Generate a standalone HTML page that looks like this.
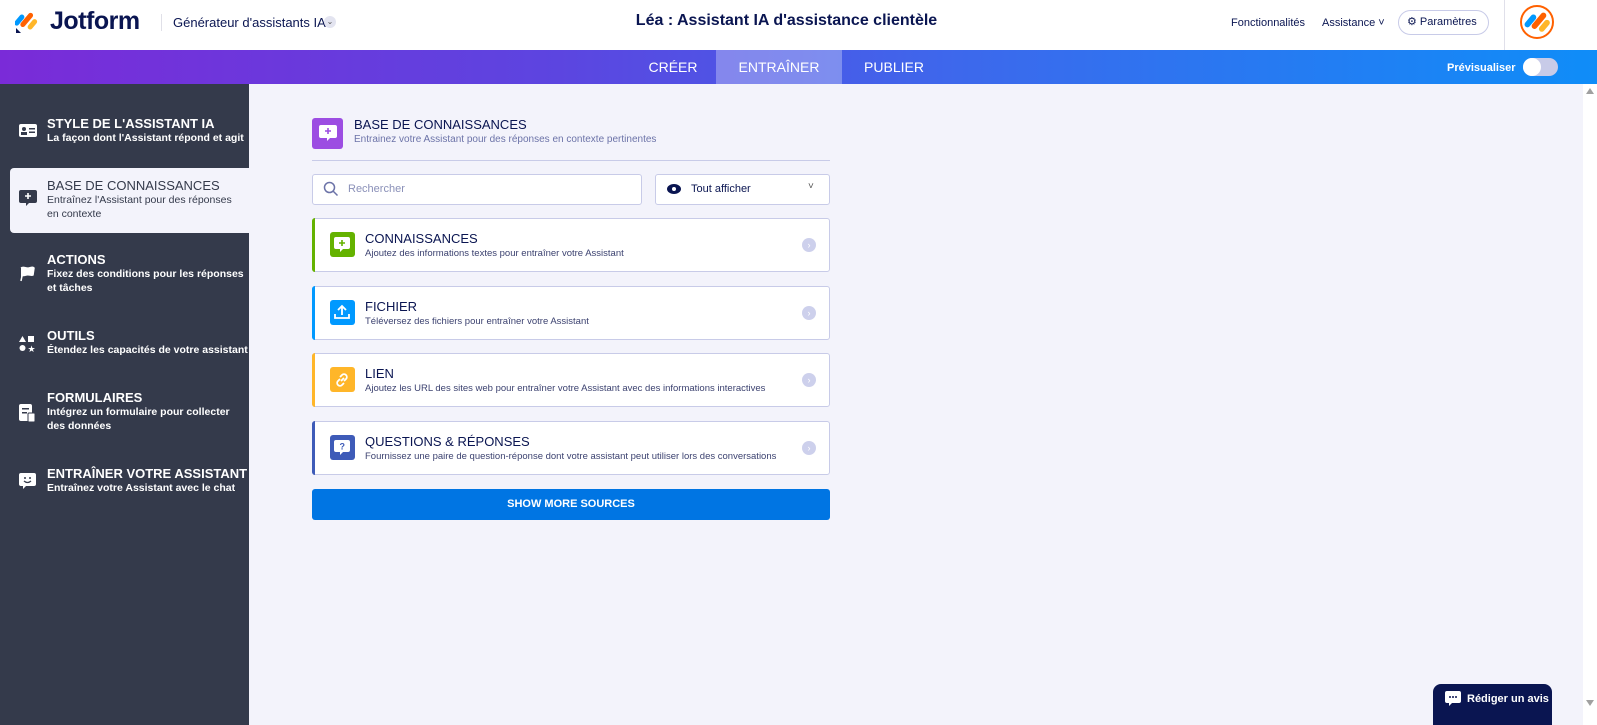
<!DOCTYPE html>
<html><head><meta charset="utf-8"><style>
*{box-sizing:border-box;margin:0;padding:0}
body{width:1597px;height:725px;overflow:hidden;font-family:"Liberation Sans",sans-serif;background:#f3f3fb;position:relative;color:#0a1551}
.hdr{position:absolute;left:0;top:0;width:1597px;height:50px;background:#fff}
.nav{position:absolute;left:0;top:50px;width:1597px;height:34px;background:linear-gradient(90deg,#7a2bd8 0%,#5c45e0 35%,#3d68ec 60%,#0f8df8 100%)}
.tab{position:absolute;top:0;height:34px;line-height:34px;color:#fff;font-size:14px;text-align:center}
.side{position:absolute;left:0;top:84px;width:249px;height:641px;background:#343a4b}
.si{position:absolute;left:47px;color:#fff}
.si b{display:block;font-size:13px;font-weight:bold}
.si span{display:block;font-size:10.5px;line-height:14px;font-weight:bold}
.ic{position:absolute;left:19px}
.card{position:absolute;left:312px;width:518px;height:54px;background:#fff;border:1px solid #c8cbe8;border-radius:3px}
.card .bar{position:absolute;left:-1px;top:-1px;bottom:-1px;width:3px;border-radius:3px 0 0 3px}
.card .ci{position:absolute;left:17px;top:13px;width:25px;height:25px;border-radius:3px}
.card b{position:absolute;left:52px;top:12px;font-size:13px;font-weight:normal;color:#0a1551}
.card span{position:absolute;left:52px;top:29px;font-size:9.5px;color:#3c4270}
.card .ch{position:absolute;right:13px;top:19px;width:14px;height:14px;border-radius:50%;background:#cdd0ec;color:#fff;font-size:9px;text-align:center;line-height:14px}
</style></head><body>
<div class="hdr">
 <svg style="position:absolute;left:15px;top:8px" width="24" height="26" viewBox="0 0 24 26"><rect x="2" y="6" width="5" height="13" rx="2.5" transform="rotate(40 5 12)" fill="#0099ff"/><rect x="9" y="3" width="5" height="17" rx="2.5" transform="rotate(40 11 12)" fill="#ff6100"/><rect x="15" y="10" width="5" height="12" rx="2.5" transform="rotate(40 17 16)" fill="#ffb629"/><path d="M1 20 L6 25 L1 25Z" fill="#0a1551"/></svg>
 <div style="position:absolute;left:50px;top:7px;font-size:25px;font-weight:bold;color:#0a1551;letter-spacing:-0.5px">Jotform</div>
 <div style="position:absolute;left:161px;top:14px;width:1px;height:17px;background:#e0e0e8"></div>
 <div style="position:absolute;left:173px;top:15px;font-size:13px;color:#0a1551">Générateur d'assistants IA</div>
 <div style="position:absolute;left:324px;top:16px;width:12px;height:12px;border-radius:50%;background:#e3e4f0;font-size:8px;text-align:center;line-height:12px;color:#555">⌄</div>
 <div style="position:absolute;left:0;width:1597px;top:12px;text-align:center;font-size:16px;font-weight:bold;color:#0a1551;padding-right:24px">Léa : Assistant IA d'assistance clientèle</div>
 <div style="position:absolute;left:1231px;top:17px;font-size:11px;color:#0a1551">Fonctionnalités</div>
 <div style="position:absolute;left:1322px;top:17px;font-size:11px;color:#0a1551">Assistance ˅</div>
 <div style="position:absolute;left:1398px;top:10px;width:91px;height:25px;border:1px solid #c8cbe8;border-radius:13px;font-size:11px;line-height:23px;padding-left:8px;color:#0a1551">⚙ Paramètres</div>
 <div style="position:absolute;left:1504px;top:0;width:1px;height:50px;background:#e0e0ea"></div>
 <div style="position:absolute;left:1520px;top:5px;width:34px;height:34px;border-radius:50%;border:2px solid #ff6100;background:#fff;overflow:hidden"><svg width="30" height="30" viewBox="0 0 24 26"><rect x="4" y="6" width="5" height="13" rx="2.5" transform="rotate(40 7 12)" fill="#0099ff"/><rect x="11" y="3" width="5" height="17" rx="2.5" transform="rotate(40 13 12)" fill="#ff6100"/><rect x="16" y="10" width="5" height="12" rx="2.5" transform="rotate(40 18 16)" fill="#ffb629"/></svg></div>
</div>
<div class="nav">
 <div class="tab" style="left:630px;width:86px">CRÉER</div>
 <div class="tab" style="left:716px;width:126px;background:rgba(255,255,255,0.3)">ENTRAÎNER</div>
 <div class="tab" style="left:842px;width:104px">PUBLIER</div>
 <div style="position:absolute;left:1447px;top:12px;color:#fff;font-size:11px;font-weight:bold">Prévisualiser</div>
 <div style="position:absolute;left:1523px;top:8px;width:35px;height:18px;border-radius:9px;background:#c8cbe8"></div>
 <div style="position:absolute;left:1523px;top:8px;width:18px;height:18px;border-radius:50%;background:#fff"></div>
</div>
<div class="side">
 <svg class="ic" style="top:40px" width="18" height="13"><rect width="18" height="13" rx="2" fill="#fff"/><circle cx="5" cy="5" r="2" fill="#343a4b"/><rect x="2" y="8" width="6" height="3" fill="#343a4b"/><rect x="10" y="4" width="6" height="1.5" fill="#343a4b"/><rect x="10" y="7.5" width="6" height="1.5" fill="#343a4b"/></svg>
 <div class="si" style="top:32px"><b>STYLE DE L'ASSISTANT IA</b><span>La façon dont l'Assistant répond et agit</span></div>
 <div style="position:absolute;left:10px;top:84px;width:239px;height:65px;background:#f3f3fb;border-radius:4px 0 0 4px"></div>
 <svg class="ic" style="top:106px" width="18" height="16"><path d="M2 0h14a2 2 0 0 1 2 2v9a2 2 0 0 1-2 2h-6l-3 3v-3H2a2 2 0 0 1-2-2V2a2 2 0 0 1 2-2z" fill="#343a4b"/><path d="M9 3v6M6 6h6" stroke="#fff" stroke-width="1.6"/></svg>
 <div class="si" style="top:94px;color:#343a4b"><b style="font-weight:normal;color:#343a4b">BASE DE CONNAISSANCES</b><span style="font-weight:normal;color:#343a4b">Entraînez l'Assistant pour des réponses<br>en contexte</span></div>
 <svg class="ic" style="top:182px" width="16" height="16"><path d="M2 2c3-2 5 1 8 0s4-1 5 0l-1 7c-2 1-4-1-7 0s-3 0-4 1l-1 5" stroke="#fff" stroke-width="1.5" fill="#fff"/></svg>
 <div class="si" style="top:168px"><b>ACTIONS</b><span>Fixez des conditions pour les réponses<br>et tâches</span></div>
 <svg class="ic" style="top:252px" width="16" height="16"><path d="M3.5 0L7 6H0z" fill="#fff"/><rect x="9" y="0" width="6" height="6" fill="#fff"/><circle cx="3.5" cy="12" r="3" fill="#fff"/><text x="8.5" y="16" fill="#fff" font-size="9">★</text></svg>
 <div class="si" style="top:244px"><b>OUTILS</b><span>Étendez les capacités de votre assistant</span></div>
 <svg class="ic" style="top:320px" width="17" height="19"><rect width="13" height="17" rx="2" fill="#fff"/><rect x="3" y="4" width="7" height="1.5" fill="#343a4b"/><rect x="3" y="8" width="5" height="1.5" fill="#343a4b"/><rect x="9" y="9" width="7" height="9" rx="1" fill="#fff" stroke="#343a4b"/></svg>
 <div class="si" style="top:306px"><b>FORMULAIRES</b><span>Intégrez un formulaire pour collecter<br>des données</span></div>
 <svg class="ic" style="top:389px" width="17" height="17"><path d="M2 0h13a2 2 0 0 1 2 2v9a2 2 0 0 1-2 2H7l-3 3v-3H2a2 2 0 0 1-2-2V2a2 2 0 0 1 2-2z" fill="#fff"/><circle cx="6" cy="5" r="1" fill="#343a4b"/><circle cx="11" cy="5" r="1" fill="#343a4b"/><path d="M5 8q3.5 3 7 0" stroke="#343a4b" stroke-width="1.3" fill="none"/></svg>
 <div class="si" style="top:382px"><b>ENTRAÎNER VOTRE ASSISTANT</b><span>Entraînez votre Assistant avec le chat</span></div>
</div>
<div style="position:absolute;left:312px;top:118px;width:31px;height:31px;border-radius:3px;background:#9c4de2"></div>
<svg style="position:absolute;left:319px;top:125px" width="18" height="17"><path d="M2 0h14a2 2 0 0 1 2 2v9a2 2 0 0 1-2 2h-5l-3 3v-3H2a2 2 0 0 1-2-2V2a2 2 0 0 1 2-2z" fill="#fff"/><path d="M9 3v6M6 6h6" stroke="#9c4de2" stroke-width="1.6"/></svg>
<div style="position:absolute;left:354px;top:117px;font-size:13px">BASE DE CONNAISSANCES</div>
<div style="position:absolute;left:354px;top:134px;font-size:10px;color:#6c73a8">Entrainez votre Assistant pour des réponses en contexte pertinentes</div>
<div style="position:absolute;left:312px;top:160px;width:518px;height:1px;background:#c8cbe8"></div>
<div style="position:absolute;left:312px;top:174px;width:330px;height:31px;background:#fff;border:1px solid #c8cbe8;border-radius:3px"></div>
<svg style="position:absolute;left:323px;top:181px" width="16" height="16"><circle cx="6.5" cy="6.5" r="5" stroke="#6c73a8" stroke-width="1.5" fill="none"/><path d="M10 10l4.5 4.5" stroke="#6c73a8" stroke-width="1.5"/></svg>
<div style="position:absolute;left:348px;top:183px;font-size:11px;color:#8a90b8">Rechercher</div>
<div style="position:absolute;left:655px;top:174px;width:175px;height:31px;background:#fff;border:1px solid #c8cbe8;border-radius:3px"></div>
<svg style="position:absolute;left:667px;top:184px" width="14" height="10"><ellipse cx="7" cy="5" rx="7" ry="5" fill="#0a1551"/><circle cx="7" cy="5" r="2" fill="#fff"/></svg>
<div style="position:absolute;left:691px;top:183px;font-size:11px">Tout afficher</div>
<div style="position:absolute;left:808px;top:181px;font-size:10px;color:#555">˅</div>

<div class="card" style="top:218px"><div class="bar" style="background:#64b200"></div><div class="ci" style="background:#64b200"></div><b>CONNAISSANCES</b><span>Ajoutez des informations textes pour entraîner votre Assistant</span><div class="ch">›</div></div>
<svg style="position:absolute;left:334px;top:237px" width="16" height="15"><path d="M2 0h12a2 2 0 0 1 2 2v8a2 2 0 0 1-2 2H9l-3 3v-3H2a2 2 0 0 1-2-2V2a2 2 0 0 1 2-2z" fill="#fff"/><path d="M8 3v6M5 6h6" stroke="#64b200" stroke-width="1.6"/></svg>
<div class="card" style="top:286px"><div class="bar" style="background:#0099ff"></div><div class="ci" style="background:#0099ff"></div><b>FICHIER</b><span>Téléversez des fichiers pour entraîner votre Assistant</span><div class="ch">›</div></div>
<svg style="position:absolute;left:334px;top:304px" width="16" height="16"><path d="M8 11V2M4 6l4-4 4 4M1 10v4h14v-4" stroke="#fff" stroke-width="1.8" fill="none"/></svg>
<div class="card" style="top:353px"><div class="bar" style="background:#ffb629"></div><div class="ci" style="background:#ffb629"></div><b>LIEN</b><span>Ajoutez les URL des sites web pour entraîner votre Assistant avec des informations interactives</span><div class="ch">›</div></div>
<svg style="position:absolute;left:334px;top:372px" width="16" height="16"><path d="M7 9l3-3M6 5l2-2a2.8 2.8 0 0 1 4 4l-2 2M10 11l-2 2a2.8 2.8 0 0 1-4-4l2-2" stroke="#fff" stroke-width="1.8" fill="none"/></svg>
<div class="card" style="top:421px"><div class="bar" style="background:#3e5bb8"></div><div class="ci" style="background:#3e5bb8"></div><b>QUESTIONS &amp; RÉPONSES</b><span>Fournissez une paire de question-réponse dont votre assistant peut utiliser lors des conversations</span><div class="ch">›</div></div>
<svg style="position:absolute;left:334px;top:440px" width="16" height="15"><path d="M2 0h12a2 2 0 0 1 2 2v8a2 2 0 0 1-2 2H9l-3 3v-3H2a2 2 0 0 1-2-2V2a2 2 0 0 1 2-2z" fill="#fff"/><text x="5.5" y="9.5" font-size="9" font-weight="bold" fill="#3e5bb8" font-family="Liberation Sans">?</text></svg>
<div style="position:absolute;left:312px;top:489px;width:518px;height:31px;background:#0075e3;border-radius:3px;color:#fff;font-size:11px;font-weight:bold;text-align:center;line-height:31px">SHOW MORE SOURCES</div>

<div style="position:absolute;left:1583px;top:84px;width:14px;height:641px;background:#fff"></div>
<div style="position:absolute;left:1586px;top:88px;width:0;height:0;border-left:4px solid transparent;border-right:4px solid transparent;border-bottom:6px solid #a0a0a0"></div>
<div style="position:absolute;left:1586px;top:700px;width:0;height:0;border-left:4px solid transparent;border-right:4px solid transparent;border-top:6px solid #a0a0a0"></div>
<div style="position:absolute;left:1433px;top:684px;width:119px;height:41px;background:#0a1551;border-radius:8px 8px 0 0;color:#fff;font-size:11px;font-weight:bold;line-height:30px;padding-left:34px">Rédiger un avis</div>
<svg style="position:absolute;left:1445px;top:691px" width="16" height="15"><path d="M2 0h12a2 2 0 0 1 2 2v8a2 2 0 0 1-2 2H7l-3 3v-3H2a2 2 0 0 1-2-2V2a2 2 0 0 1 2-2z" fill="#fff"/><circle cx="5" cy="6" r="1" fill="#0a1551"/><circle cx="8" cy="6" r="1" fill="#0a1551"/><circle cx="11" cy="6" r="1" fill="#0a1551"/></svg>
</body></html>
